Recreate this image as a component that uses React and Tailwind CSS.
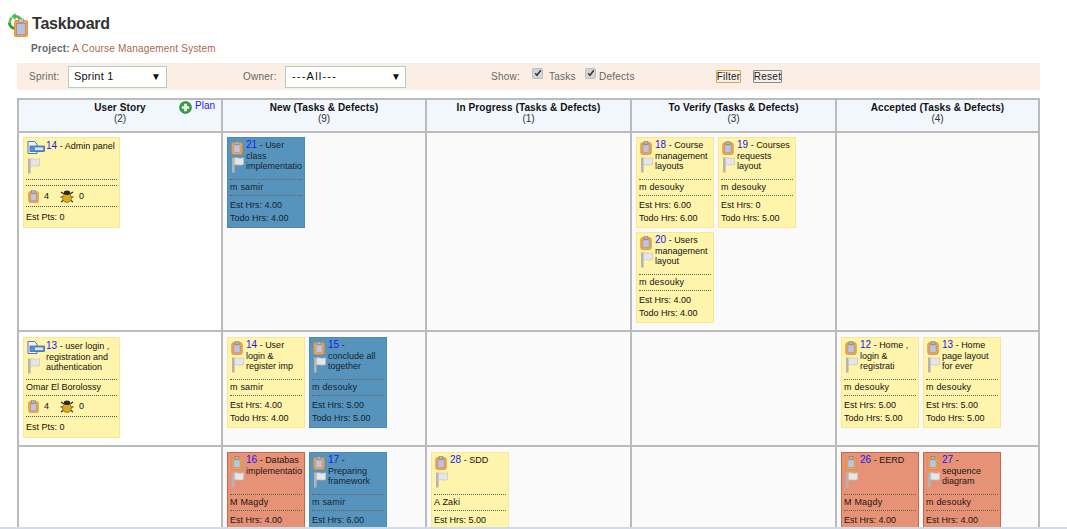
import React from 'react'

const font = { fontFamily: '"Liberation Sans", Arial, sans-serif' }

const Clipboard = ({ size = 15 }) => (
  <svg width={size} height={Math.round(size * 1.2)} viewBox="0 0 15 18" className="shrink-0">
    <rect x="0.8" y="2" width="13.4" height="15.4" rx="2.5" fill="#f5a54c" stroke="#e08a30" />
    <rect x="3.5" y="5" width="8" height="10" fill="#bcc4de" stroke="#8a92b2" strokeWidth="0.7" />
    <rect x="5" y="0.8" width="5" height="3.7" fill="#b5b5b5" stroke="#707070" strokeWidth="0.6" />
  </svg>
)

const Flag = () => (
  <svg width="13" height="16" viewBox="0 0 13 16" className="shrink-0">
    <rect x="1" y="0.5" width="2.6" height="15" fill="#b4b4b4" />
    <path d="M3.6 1 C6 0 8 2.4 12.5 0.8 L12.5 7.5 C8.5 9 6 6.8 3.6 8 Z" fill="#e6e6e6" stroke="#c4c4c4" strokeWidth="0.7" />
  </svg>
)

const StoryIcon = () => (
  <svg width="18" height="13" viewBox="0 0 18 13" className="shrink-0">
    <path d="M1 0.5 H7.5 L10 3 V12.5 H1 Z" fill="#eef3fb" stroke="#4a78b8" />
    <rect x="3" y="5" width="14.5" height="5.5" fill="#5d8fd2" stroke="#2d5ea8" strokeWidth="0.7" />
    <rect x="8" y="6.5" width="8" height="2.5" fill="#dbe8fa" />
  </svg>
)

const Bug = () => (
  <svg width="14" height="13" viewBox="0 0 14 13" className="shrink-0">
    <path d="M1 2 L4 4 M13 2 L10 4 M0.5 7 H3 M13.5 7 H11 M1 12 L4 10 M13 12 L10 10" stroke="#222" strokeWidth="1.1" />
    <ellipse cx="7" cy="8" rx="4.5" ry="4.5" fill="#dca81c" stroke="#8a6408" strokeWidth="0.7" />
    <ellipse cx="7" cy="2.8" rx="3.2" ry="2.3" fill="#2a2a2a" />
  </svg>
)

const Logo = () => (
  <div className="relative h-[24px] w-[26px] shrink-0">
    <svg width="19" height="19" viewBox="0 0 20 20" className="absolute left-0 top-0">
      <path d="M10 2 A8 8 0 0 1 18 10 L15 10 A5 5 0 0 0 10 5 L10 7.5 L5.5 3.5 L10 0 Z" fill="#4cb84a" />
      <path d="M10 18 A8 8 0 0 1 2 10 L5 10 A5 5 0 0 0 10 15 L10 12.5 L14.5 16.5 L10 20 Z" fill="#2f9e3a" />
      <path d="M2.5 10 A8 8 0 0 1 5 4 L7 6 A5 5 0 0 0 5 10 Z" fill="#58c455" />
    </svg>
    <svg width="16" height="19" viewBox="0 0 16 22" className="absolute left-[7px] top-[5px]">
      <rect x="0.5" y="3" width="15" height="18.5" rx="1.5" fill="#f5a54c" stroke="#e08a30" />
      <rect x="3" y="6.5" width="10" height="12.5" fill="#bcc0da" stroke="#7d84a6" strokeWidth="0.7" />
      <rect x="5" y="1" width="6" height="4" fill="#c4c4c4" stroke="#808080" strokeWidth="0.6" />
    </svg>
  </div>
)

const PlusCircle = () => (
  <svg width="13" height="13" viewBox="0 0 13 13" className="shrink-0">
    <circle cx="6.5" cy="6.5" r="6" fill="#35a13a" stroke="#237a2a" strokeWidth="0.6" />
    <path d="M5.2 2.8 H7.8 V5.2 H10.2 V7.8 H7.8 V10.2 H5.2 V7.8 H2.8 V5.2 H5.2 Z" fill="#fff" />
  </svg>
)

const Check = () => (
  <span className="mt-[-7px] flex h-[11px] w-[11px] items-center justify-center rounded-[2px] border border-[#bdbdbd] bg-[#d6d6d6]">
    <svg width="8" height="8" viewBox="0 0 8 8">
      <path d="M1.2 4.2 L3 6.2 L6.8 1.2" fill="none" stroke="#333" strokeWidth="1.5" />
    </svg>
  </span>
)

const cardColors = {
  yellow: 'bg-[#fff4ab] border-[#fde692] text-[#111]',
  blue: 'bg-[#5794bd] border-[#4e8ab6] text-[#16232c]',
  red: 'bg-[#e59277] border-[#c9664e] text-[#241512]',
}

const TaskCard = ({ id, title, name, est, todo, color = 'yellow' }) => (
  <div className={`h-[91px] w-[78px] shrink-0 overflow-hidden border text-[9px] leading-[10.5px] ${cardColors[color]}`}>
    <div className="mx-[2px] flex h-[42px] border-b border-dotted border-[#6b5f50] pt-[3px]">
      <div className="flex w-[16px] shrink-0 flex-col gap-[2px] pl-[1px]">
        <Clipboard size={12} />
        <Flag />
      </div>
      <div className="mt-[-1px] w-[56px] shrink-0 overflow-hidden whitespace-pre">
        <span className="text-[10px] text-[#1a1aee]">{id}</span> - {title}
      </div>
    </div>
    <div className="mx-[2px] flex h-[16px] items-center border-b border-dotted border-[#6b5f50] tracking-[0.2px]">{name}</div>
    <div className="mx-[2px] pt-[3px] leading-[13px]">
      <div>Est Hrs: {est}</div>
      <div>Todo Hrs: {todo}</div>
    </div>
  </div>
)

const StoryCard = ({ id, title, name, tasks }) => (
  <div className="w-[97px] border border-[#fde692] bg-[#fff4ab] text-[9px] leading-[10.5px] text-[#111]">
    <div className="mx-[2px] flex h-[42px] border-b border-dotted border-[#555] pt-[3px]">
      <div className="flex w-[20px] shrink-0 flex-col gap-[4px] pl-[1px]">
        <StoryIcon />
        <Flag />
      </div>
      <div className="whitespace-pre"><span className="text-[10px] text-[#1a1aee]">{id}</span> - {title}</div>
    </div>
    <div className={`mx-[2px] flex items-center border-b border-dotted border-[#555] ${name ? 'h-[16px]' : 'h-[6px]'}`}>{name}</div>
    <div className="mx-[2px] flex h-[21px] items-center border-b border-dotted border-[#555] pl-[2px]">
      <Clipboard size={11} />
      <span className="ml-[5px] w-[16px]">{tasks}</span>
      <Bug />
      <span className="ml-[5px]">0</span>
    </div>
    <div className="mx-[2px] flex h-[20px] items-center">Est Pts: 0</div>
  </div>
)

const HeaderCell = ({ title, count, plan, last }) => (
  <div className={`relative h-[31px] border-l-2 border-[#bbb] bg-[#f2f7fe] pt-[3px] text-center text-[10px] leading-[10.5px] ${last ? 'border-r-2' : ''}`}>
    <div className="font-bold tracking-[0.1px] text-[#111]">{title}</div>
    <div className="text-[#333]">({count})</div>
    {plan && (
      <div className="absolute right-[6px] top-[1px] flex items-start gap-[1px] text-[#1a1aee]">
        <PlusCircle />
        <span className="ml-[2px]">Plan</span>
      </div>
    )}
  </div>
)

const Cell = ({ children, height, story, last, first }) => (
  <div className={`flex flex-wrap content-start gap-[4px] border-l-2 border-[#bbb] px-[4px] ${first ? 'pt-[4px]' : 'pt-[5px]'} ${story ? 'bg-white' : 'bg-[#fafafa]'} ${last ? 'border-r-2' : ''} ${height}`}>
    {children}
  </div>
)

export default function App() {
  return (
    <div style={font} className="relative h-[529px] w-[1067px] overflow-hidden bg-white">
      <div className="flex h-[43px] items-start pl-[6px] pt-[13px]">
        <Logo />
        <h1 className="mt-[1px] text-[16px] font-bold leading-[20px] tracking-[-0.2px] text-[#333]">Taskboard</h1>
      </div>
      <div className="pl-[31px] text-[10px] leading-[12px] tracking-[0.2px] text-[#a5694f]">
        <span className="font-bold text-[#666]">Project:</span> A Course Management System
      </div>
      <div className="mx-[17px] mt-[8px] flex h-[27px] w-[1023px] items-center bg-[#fbeee4] pl-[12px] text-[10px] tracking-[0.25px] text-[#666]">
        <span className="w-[39px]">Sprint:</span>
        <div className="flex h-[22px] w-[99px] items-center justify-between border border-[#b2cfc5] bg-white pl-[5px] pr-[5px] text-[11px] tracking-[0.2px] text-[#111]">
          Sprint 1 <span className="text-[10px]">▼</span>
        </div>
        <span className="ml-[76px] w-[42px]">Owner:</span>
        <div className="flex h-[22px] w-[121px] items-center justify-between border border-[#b2cfc5] bg-white pl-[6px] pr-[3px] text-[11px] tracking-[1.2px] text-[#111]">
          ---All--- <span className="text-[10px]">▼</span>
        </div>
        <span className="ml-[85px] w-[41px]">Show:</span>
        <Check />
        <span className="ml-[6px] w-[36px]">Tasks</span>
        <Check />
        <span className="ml-[3px] w-[35px]">Defects</span>
        <div className="ml-[82px] flex h-[13px] w-[25px] items-center justify-center rounded-[1px] border border-[#e0a24a] bg-[#f4f0ea] text-[#222]">Filter</div>
        <div className="ml-[12px] flex h-[13px] w-[29px] items-center justify-center rounded-[1px] border border-[#888] bg-[#f4f0ea] text-[#222]">Reset</div>
      </div>
      <div className="ml-[17px] mt-[8px] grid w-[1023px] grid-cols-[204px_204px_205px_205px_205px] border-t-2 border-[#bbb]">
        <HeaderCell title="User Story" count="2" plan />
        <HeaderCell title="New (Tasks & Defects)" count="9" />
        <HeaderCell title="In Progress (Tasks & Defects)" count="1" />
        <HeaderCell title="To Verify (Tasks & Defects)" count="3" />
        <HeaderCell title="Accepted (Tasks & Defects)" count="4" last />

        <div className="col-span-5 h-[2px] bg-[#bbb]" />

        <Cell first story height="h-[197px]">
          <StoryCard id="14" title="Admin panel" tasks="4" />
        </Cell>
        <Cell first height="h-[197px]">
          <TaskCard id="21" color="blue" title={'User\nclass\nimplementatio'} name="m samir" est="4.00" todo="4.00" />
        </Cell>
        <Cell first height="h-[197px]" />
        <Cell first height="h-[197px]">
          <TaskCard id="18" title={'Course\nmanagement\nlayouts'} name="m desouky" est="6.00" todo="6.00" />
          <TaskCard id="19" title={'Courses\nrequests\nlayout'} name="m desouky" est="0" todo="5.00" />
          <TaskCard id="20" title={'Users\nmanagement\nlayout'} name="m desouky" est="4.00" todo="4.00" />
        </Cell>
        <Cell first last height="h-[197px]" />

        <div className="col-span-5 h-[2px] bg-[#bbb]" />

        <Cell story height="h-[113px]">
          <StoryCard id="13" title={'user login ,\nregistration and\nauthentication'} name="Omar El Borolossy" tasks="4" />
        </Cell>
        <Cell height="h-[113px]">
          <TaskCard id="14" title={'User\nlogin &\nregister imp'} name="m samir" est="4.00" todo="4.00" />
          <TaskCard id="15" color="blue" title={'\nconclude all\ntogether'} name="m desouky" est="5.00" todo="5.00" />
        </Cell>
        <Cell height="h-[113px]" />
        <Cell height="h-[113px]" />
        <Cell last height="h-[113px]">
          <TaskCard id="12" title={'Home ,\nlogin &\nregistrati'} name="m desouky" est="5.00" todo="5.00" />
          <TaskCard id="13" title={'Home\npage layout\nfor ever'} name="m desouky" est="5.00" todo="5.00" />
        </Cell>

        <div className="col-span-5 h-[2px] bg-[#bbb]" />

        <Cell story height="h-[120px]" />
        <Cell height="h-[120px]">
          <TaskCard id="16" color="red" title={'Databas\nimplementatio'} name="M Magdy" est="4.00" todo="4.00" />
          <TaskCard id="17" color="blue" title={'\nPreparing\nframework'} name="m samir" est="6.00" todo="6.00" />
        </Cell>
        <Cell height="h-[120px]">
          <TaskCard id="28" title="SDD" name="A Zaki" est="5.00" todo="5.00" />
        </Cell>
        <Cell height="h-[120px]" />
        <Cell last height="h-[120px]">
          <TaskCard id="26" color="red" title="EERD" name="M Magdy" est="4.00" todo="4.00" />
          <TaskCard id="27" color="red" title={'\nsequence\ndiagram'} name="m desouky" est="4.00" todo="4.00" />
        </Cell>
      </div>
      <div className="absolute bottom-0 left-0 h-[2px] w-full bg-[#cfdcea]" />
    </div>
  )
}
